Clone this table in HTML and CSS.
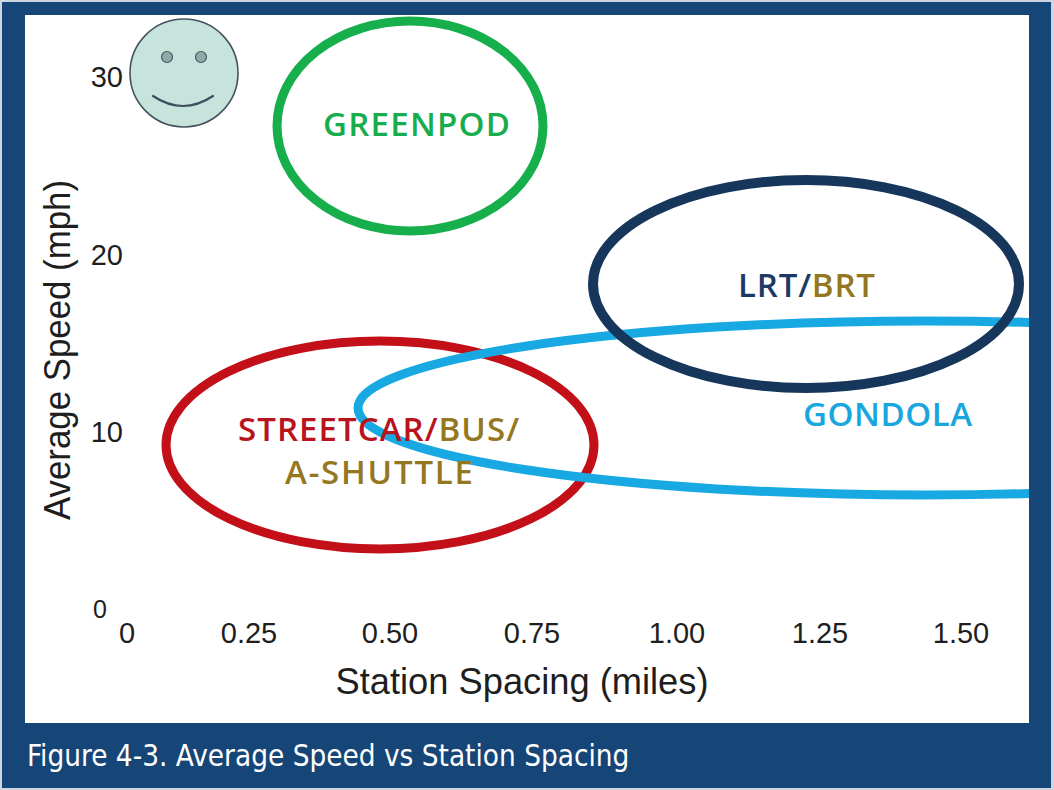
FILE: index.html
```html
<!DOCTYPE html>
<html lang="en">
<head>
<meta charset="utf-8">
<title>Figure 4-3. Average Speed vs Station Spacing</title>
<link rel="stylesheet" href="styles.css">
</head>
<body>
<div class="frame">
  <div class="plot">
    <svg class="chart" width="1004" height="708" viewBox="25 15 1004 708" xmlns="http://www.w3.org/2000/svg">
      <!-- smiley -->
      <circle class="face" cx="184" cy="73" r="54"/>
      <circle class="eye" cx="167" cy="57" r="5.5"/>
      <circle class="eye" cx="201" cy="57" r="5.5"/>
      <path class="smile" d="M153 96 Q183 116 213 96"/>

      <!-- axis ticks -->
      <text class="tick" x="123" y="87" text-anchor="end">30</text>
      <text class="tick" x="123" y="265" text-anchor="end">20</text>
      <text class="tick" x="123" y="442" text-anchor="end">10</text>
      <text class="tick small" x="107" y="618" text-anchor="end">0</text>

      <text class="tick" x="127" y="643" text-anchor="middle">0</text>
      <text class="tick" x="249" y="643" text-anchor="middle">0.25</text>
      <text class="tick" x="390" y="643" text-anchor="middle">0.50</text>
      <text class="tick" x="532" y="643" text-anchor="middle">0.75</text>
      <text class="tick" x="677" y="643" text-anchor="middle">1.00</text>
      <text class="tick" x="820" y="643" text-anchor="middle">1.25</text>
      <text class="tick" x="961" y="643" text-anchor="middle">1.50</text>

      <text class="axis" x="522" y="694" text-anchor="middle" textLength="373" lengthAdjust="spacingAndGlyphs">Station Spacing (miles)</text>
      <text class="axis" x="70" y="350" text-anchor="middle" textLength="340" lengthAdjust="spacingAndGlyphs" transform="rotate(-90 70 350)">Average Speed (mph)</text>

      <!-- regions -->
      <ellipse class="ring green" cx="410" cy="126" rx="133" ry="105"/>
      <ellipse class="ring red" cx="380" cy="445" rx="214" ry="104"/>
      <ellipse class="ring sky" cx="925" cy="408" rx="567" ry="87"/>
      <ellipse class="ring navy" cx="806" cy="284" rx="213" ry="104"/>

      <!-- labels -->
      <text class="label t-green" x="323" y="136" textLength="187" lengthAdjust="spacing">GREENPOD</text>
      <text class="label" x="738" y="297" textLength="137" lengthAdjust="spacing"><tspan class="t-navy">LRT/</tspan><tspan class="t-gold">BRT</tspan></text>
      <text class="label t-sky" x="803" y="426" textLength="169" lengthAdjust="spacing">GONDOLA</text>
      <text class="label" x="238" y="441" textLength="281" lengthAdjust="spacing"><tspan class="t-red">STREETCAR/</tspan><tspan class="t-gold">BUS/</tspan></text>
      <text class="label t-gold" x="285" y="484" textLength="188" lengthAdjust="spacing">A-SHUTTLE</text>
    </svg>
  </div>
  <div class="caption">Figure 4-3. Average Speed vs Station Spacing</div>
</div>
</body>
</html>
```

FILE: styles.css
```css
html, body {
  margin: 0;
  padding: 0;
}

body {
  background: #cdd6e1;
  width: 1054px;
  height: 790px;
  overflow: hidden;
}

.frame {
  margin: 2px 3px 2px 2px;
  width: 1049px;
  height: 786px;
  background: #164677;
  display: flex;
  flex-direction: column;
  box-sizing: border-box;
  padding: 13px 22px 0 23px;
}

.plot {
  background: #ffffff;
  width: 1004px;
  height: 708px;
  flex: none;
  overflow: hidden;
}

.chart {
  display: block;
}

.caption {
  height: 65px;
  line-height: 67px;
  margin-left: -21px;
  padding-left: 23px;
  color: #ffffff;
  font-family: "DejaVu Sans Condensed", "DejaVu Sans", sans-serif;
  font-stretch: condensed;
  font-size: 29.4px;
  white-space: nowrap;
}

.face {
  fill: #c6e3dc;
  stroke: #44525f;
  stroke-width: 1.6;
}

.eye {
  fill: #8fa9a9;
  stroke: #4a5863;
  stroke-width: 1.2;
}

.smile {
  fill: none;
  stroke: #3f4e5c;
  stroke-width: 2.2;
  stroke-linecap: round;
}

.tick {
  font-family: "Liberation Sans", Arial, sans-serif;
  font-size: 29px;
  fill: #1e1e1e;
}

.tick.small {
  font-size: 25px;
}

.axis {
  font-family: "Liberation Sans", Arial, sans-serif;
  font-size: 36px;
  fill: #1e1e1e;
}

.ring {
  fill: none;
  stroke-width: 9;
}

.ring.green { stroke: #17ae4c; }
.ring.red { stroke: #c20f18; }
.ring.sky { stroke: #18a9e3; }
.ring.navy { stroke: #17365c; stroke-width: 10; }

.label {
  font-family: "Open Sans", "Lato", sans-serif;
  font-weight: 600;
  font-size: 33px;
}

.t-green { fill: #17ad4d; }
.t-navy { fill: #1c3a63; }
.t-gold { fill: #94771f; }
.t-sky { fill: #19a6df; }
.t-red { fill: #b8141d; }
```
